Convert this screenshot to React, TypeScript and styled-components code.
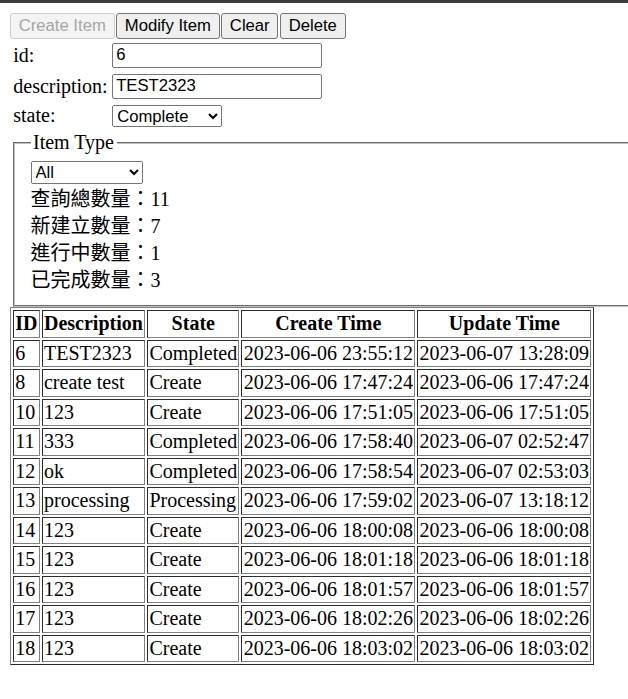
import React, { useState } from 'react';
import styled, { createGlobalStyle } from 'styled-components';

type Item = {
  id: number;
  description: string;
  state: string;
  createTime: string;
  updateTime: string;
};

const items: Item[] = [
  { id: 6, description: 'TEST2323', state: 'Completed', createTime: '2023-06-06 23:55:12', updateTime: '2023-06-07 13:28:09' },
  { id: 8, description: 'create test', state: 'Create', createTime: '2023-06-06 17:47:24', updateTime: '2023-06-06 17:47:24' },
  { id: 10, description: '123', state: 'Create', createTime: '2023-06-06 17:51:05', updateTime: '2023-06-06 17:51:05' },
  { id: 11, description: '333', state: 'Completed', createTime: '2023-06-06 17:58:40', updateTime: '2023-06-07 02:52:47' },
  { id: 12, description: 'ok', state: 'Completed', createTime: '2023-06-06 17:58:54', updateTime: '2023-06-07 02:53:03' },
  { id: 13, description: 'processing', state: 'Processing', createTime: '2023-06-06 17:59:02', updateTime: '2023-06-07 13:18:12' },
  { id: 14, description: '123', state: 'Create', createTime: '2023-06-06 18:00:08', updateTime: '2023-06-06 18:00:08' },
  { id: 15, description: '123', state: 'Create', createTime: '2023-06-06 18:01:18', updateTime: '2023-06-06 18:01:18' },
  { id: 16, description: '123', state: 'Create', createTime: '2023-06-06 18:01:57', updateTime: '2023-06-06 18:01:57' },
  { id: 17, description: '123', state: 'Create', createTime: '2023-06-06 18:02:26', updateTime: '2023-06-06 18:02:26' },
  { id: 18, description: '123', state: 'Create', createTime: '2023-06-06 18:03:02', updateTime: '2023-06-06 18:03:02' },
];

const GlobalStyle = createGlobalStyle`
  html, body {
    margin: 0;
    overflow-x: hidden;
    background: #fff;
  }
  body {
    font-family: "Liberation Serif", "Noto Sans CJK TC", serif;
    font-size: 20px;
    color: #000;
  }
`;

const TopEdge = styled.div`
  height: 3px;
  background: #3a3a3a;
`;

const Page = styled.div`
  padding: 10px;
`;

const Toolbar = styled.div`
  display: flex;
  gap: 1.5px;
`;

const Button = styled.button`
  height: 26px;
  padding: 0 7.75px;
  font-family: "Liberation Sans", Arial, sans-serif;
  font-size: 16.67px;
  color: #000;
  background: #efefef;
  border: 1px solid #767676;
  border-radius: 3px;
  cursor: pointer;

  &:disabled {
    color: #a6a6a6;
    background: #f4f4f4;
    border-color: #cdcdcd;
    cursor: default;
  }
`;

const FormTable = styled.table`
  border-spacing: 2.5px;

  td {
    padding: 1.7px 1.25px;
    line-height: 23px;
    vertical-align: middle;
  }
`;

const TextInput = styled.input`
  display: block;
  box-sizing: border-box;
  width: 210px;
  height: 25.5px;
  padding: 0 3px;
  font-family: "Liberation Sans", Arial, sans-serif;
  font-size: 16.67px;
  border: 1px solid #767676;
  border-radius: 2px;
`;

const Select = styled.select<{ $width: number; $height: number }>`
  display: block;
  box-sizing: border-box;
  width: ${p => p.$width}px;
  height: ${p => p.$height}px;
  font-family: "Liberation Sans", Arial, sans-serif;
  font-size: 16.67px;
  color: #000;
`;

const Fieldset = styled.fieldset`
  width: 660px;
  margin: 0 0 0 2.5px;
  padding: 5px 16px 11px;
  border: 2px groove #c0c0c0;
`;

const Legend = styled.legend`
  padding: 0 2.5px;
  line-height: 23px;
`;

const Line = styled.div`
  display: flex;
  align-items: center;
  height: 27px;
  line-height: 27px;
`;

const DataTable = styled.table`
  border: 1px outset #808080;
  border-spacing: 2.5px;

  th, td {
    padding: 1.25px;
    border: 1px inset #808080;
    line-height: 23px;
    white-space: nowrap;
  }

  th {
    font-weight: bold;
    text-align: center;
  }

  td {
    text-align: left;
  }
`;

const counts = [
  { label: '查詢總數量', value: 11 },
  { label: '新建立數量', value: 7 },
  { label: '進行中數量', value: 1 },
  { label: '已完成數量', value: 3 },
];

export default function App() {
  const [id, setId] = useState('6');
  const [description, setDescription] = useState('TEST2323');
  const [state, setState] = useState('Complete');
  const [itemType, setItemType] = useState('All');

  return (
    <>
      <GlobalStyle />
      <TopEdge />
      <Page>
        <Toolbar>
          <Button disabled>Create Item</Button>
          <Button>Modify Item</Button>
          <Button>Clear</Button>
          <Button>Delete</Button>
        </Toolbar>

        <FormTable>
          <tbody>
            <tr>
              <td>id:</td>
              <td><TextInput value={id} onChange={e => setId(e.target.value)} /></td>
            </tr>
            <tr>
              <td>description:</td>
              <td><TextInput value={description} onChange={e => setDescription(e.target.value)} /></td>
            </tr>
            <tr>
              <td>state:</td>
              <td>
                <Select $width={110} $height={22} value={state} onChange={e => setState(e.target.value)}>
                  <option>Create</option>
                  <option>Processing</option>
                  <option>Complete</option>
                </Select>
              </td>
            </tr>
          </tbody>
        </FormTable>

        <Fieldset>
          <Legend>Item Type</Legend>
          <Line>
            <Select $width={112} $height={23} value={itemType} onChange={e => setItemType(e.target.value)}>
              <option>All</option>
              <option>Create</option>
              <option>Processing</option>
              <option>Complete</option>
            </Select>
          </Line>
          {counts.map(c => (
            <Line key={c.label} lang="zh-Hant">
              {c.label}：{c.value}
            </Line>
          ))}
        </Fieldset>

        <DataTable>
          <thead>
            <tr>
              <th>ID</th>
              <th>Description</th>
              <th>State</th>
              <th>Create Time</th>
              <th>Update Time</th>
            </tr>
          </thead>
          <tbody>
            {items.map(item => (
              <tr key={item.id}>
                <td>{item.id}</td>
                <td>{item.description}</td>
                <td>{item.state}</td>
                <td>{item.createTime}</td>
                <td>{item.updateTime}</td>
              </tr>
            ))}
          </tbody>
        </DataTable>
      </Page>
    </>
  );
}
